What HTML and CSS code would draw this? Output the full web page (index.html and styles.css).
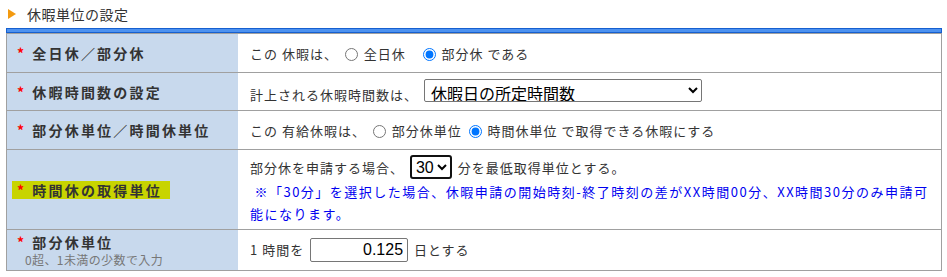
FILE: index.html
```html
<!DOCTYPE html>
<html lang="ja">
<head>
<meta charset="UTF-8" />
<title>休暇単位の設定</title>
<link rel="stylesheet" href="styles.css">
</head>
<body>

<div class="section">
  <h2 class="section-title"><span class="arrow"></span>休暇単位の設定</h2>
  <div class="bluebar"></div>

  <table class="form-table">
    <tr class="r1">
      <th><span class="req">*</span>全日休／部分休</th>
      <td>
        この 休暇は、
        <label class="opt"><input type="radio" name="kind" /> 全日休</label>
        <label class="opt gap"><input type="radio" name="kind" checked /> 部分休 である</label>
      </td>
    </tr>
    <tr class="r2">
      <th><span class="req">*</span>休暇時間数の設定</th>
      <td>
        計上される休暇時間数は、
        <select class="sel-big">
          <option>休暇日の所定時間数</option>
        </select>
      </td>
    </tr>
    <tr class="r3">
      <th><span class="req">*</span>部分休単位／時間休単位</th>
      <td>
        この 有給休暇は、
        <label class="opt"><input type="radio" name="unit" /> 部分休単位</label>
        <label class="opt"><input type="radio" name="unit" checked /> 時間休単位 で取得できる休暇にする</label>
      </td>
    </tr>
    <tr class="r4">
      <th><span class="mark"><span class="req">*</span>時間休の取得単位</span></th>
      <td>
        <div class="line">
          部分休を申請する場合、
          <select class="sel-min">
            <option>30</option>
          </select>
          分を最低取得単位とする。
        </div>
        <p class="note">&nbsp;※「30分」を選択した場合、休暇申請の開始時刻-終了時刻の差がXX時間00分、XX時間30分のみ申請可能になります。</p>
      </td>
    </tr>
    <tr class="r5">
      <th>
        <span class="req">*</span>部分休単位
        <small class="hint">0超、1未満の少数で入力</small>
      </th>
      <td>
        1 時間を
        <input type="text" class="num" value="0.125" />
        日とする
      </td>
    </tr>
  </table>
</div>

</body>
</html>
```

FILE: styles.css
```css
body {
  margin: 0;
  padding: 0 5px 0 6px;
  background: #fff;
  color: #333;
  font-family: "Noto Sans CJK JP", "Liberation Sans", sans-serif;
  font-size: 13px;
}
.section-title {
  margin: 0;
  height: 28px;
  line-height: 24px;
  font-size: 14px;
  font-weight: normal;
  letter-spacing: 0.5px;
  color: #333;
  display: flex;
  align-items: center;
  padding-left: 2px;
}
.arrow {
  display: inline-block;
  width: 0;
  height: 0;
  border-left: 8px solid #f39a10;
  border-top: 5px solid transparent;
  border-bottom: 5px solid transparent;
  margin-right: 11px;
}
.bluebar {
  height: 3px;
  background: #4d92f0;
  border: 1px solid #1660d0;
}
.form-table {
  width: 100%;
  border-collapse: collapse;
  border: 1px solid #a0a0a0;
  border-top: none;
}
.form-table th, .form-table td {
  border-top: 1px solid #a0a0a0;
  padding: 0 0 0 12px;
  vertical-align: middle;
}
.form-table th {
  width: 221px;
  background: #c8d9ed;
  text-align: left;
  font-size: 14px;
  font-weight: bold;
  letter-spacing: 2.2px;
  color: #333;
  padding-left: 10px;
}
.req {
  color: #f00;
  font-size: 14px;
  margin-right: 6px;
}
.mark {
  display: inline-block;
  background: #c8d400;
  margin-left: -5px;
  padding: 0 8px 0 5px;
  line-height: 18px;
}
.form-table td {
  letter-spacing: 1px;
  white-space: nowrap;
}
.r1 th { height: 38px; }
.r2 th { height: 37px; }
.r3 th { height: 38px; }
.r4 th { height: 79px; }
.r5 th { height: 40px; }

.opt input {
  margin: 0 2px 0 3px;
  vertical-align: -2px;
}
.opt.gap { margin-left: 10px; }

.sel-big {
  width: 278px;
  height: 23px;
  font-family: "Noto Sans CJK JP", sans-serif;
  font-size: 16px;
  color: #000;
  background: #fff;
  border: 1px solid #767676;
  border-radius: 2px;
  margin-left: 2px;
  padding: 0 2px;
}
.sel-min {
  height: 24px;
  font-family: "Liberation Sans", sans-serif;
  font-size: 16px;
  color: #000;
  background: #fff;
  border: 2px solid #111;
  border-radius: 3px;
  padding: 0;
  margin: 0 2px;
}
.line {
  line-height: 26px;
}
.note {
  margin: 0;
  white-space: normal;
  color: #0000f0;
  line-height: 22px;
  letter-spacing: 1.5px;
  padding-right: 8px;
}
.hint {
  display: block;
  font-size: 12px;
  font-weight: normal;
  letter-spacing: 0.4px;
  color: #777;
  padding-left: 8px;
  line-height: 16px;
}
.num {
  width: 88px;
  height: 20px;
  text-align: right;
  font-family: "Liberation Sans", sans-serif;
  font-size: 16px;
  color: #000;
  background: #fff;
  border: 1px solid #767676;
  border-radius: 2px;
  padding: 1px 4px;
  margin: 0 2px;
}
```
